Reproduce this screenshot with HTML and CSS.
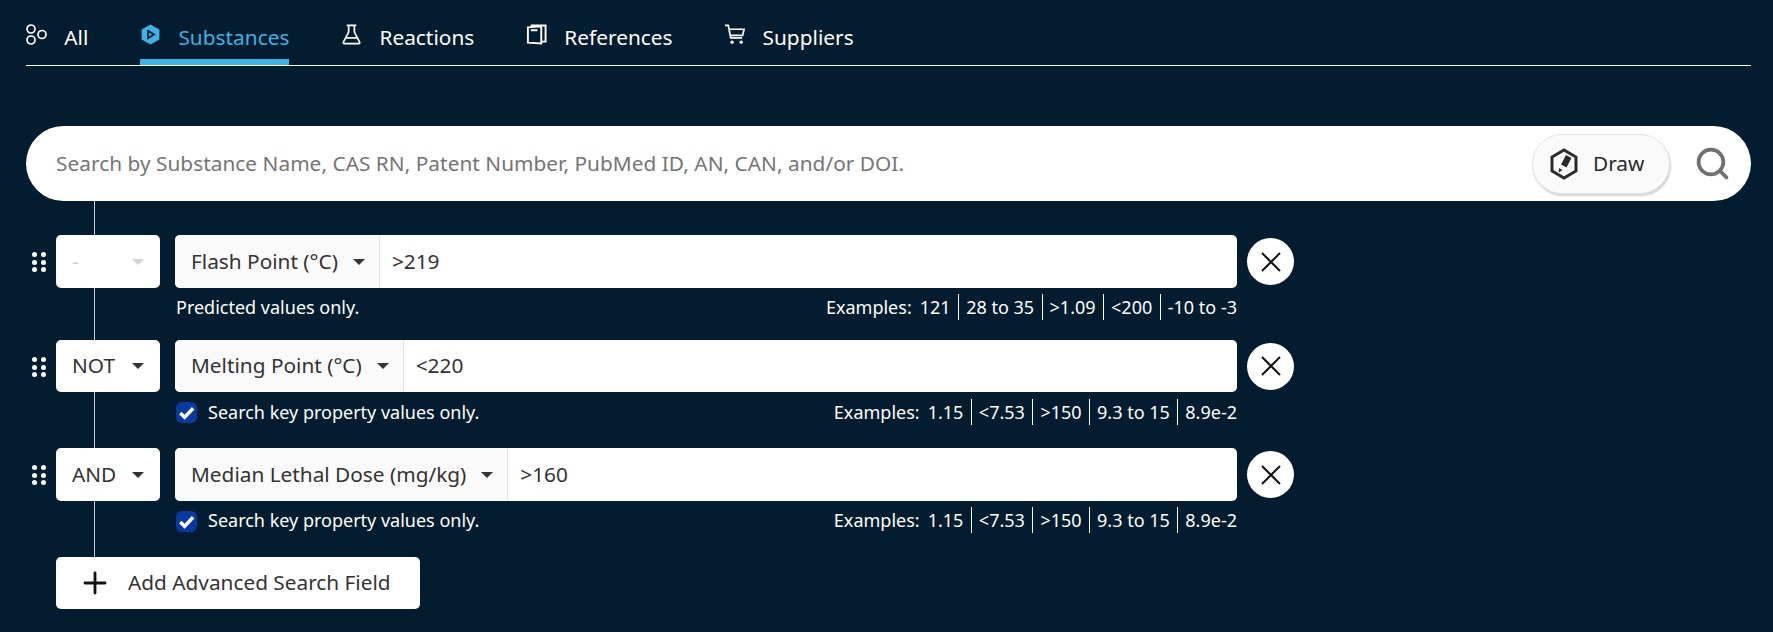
FILE: index.html
```html
<!DOCTYPE html>
<html lang="en">
<head>
<meta charset="utf-8">
<title>Advanced Search</title>
<link rel="stylesheet" href="styles.css">
</head>
<body>
<nav class="tabs">
  <a class="tab"><svg class="tab-icon" viewBox="0 0 21 21" fill="none" stroke="currentColor" stroke-width="1.700"><circle cx="5" cy="5" r="4"/><circle cx="5" cy="16" r="4"/><circle cx="16" cy="10.500" r="4"/></svg><span>All</span></a>
  <a class="tab active"><svg class="tab-icon" viewBox="0 0 22 22"><path fill="currentColor" fill-rule="evenodd" d="M11 0.500l9.300 5.200v10.600L11 21.500l-9.300-5.200V5.700zM7.500 5.500v11l9-5.500zM9.300 8.800l3.700 2.200-3.700 2.200z"/></svg><span>Substances</span></a>
  <a class="tab"><svg class="tab-icon" viewBox="0 0 22 22" fill="none" stroke="currentColor" stroke-width="1.800"><path d="M6 1.500h10M8 1.500v7L2.500 19a1 1 0 0 0 1 1.500h15a1 1 0 0 0 1-1.500L14 8.500v-7M5.500 14.500h11"/></svg><span>Reactions</span></a>
  <a class="tab"><svg class="tab-icon" viewBox="0 0 22 22" fill="none" stroke="currentColor" stroke-width="2"><path d="M2 3.500l14 -1v18l-14 -1zM5 1.500h15.500v17h-4.500M5 6.500h7"/></svg><span>References</span></a>
  <a class="tab"><svg class="tab-icon" viewBox="0 0 22 22" fill="none" stroke="currentColor" stroke-width="1.800"><path d="M1 1.500h3.500l2.500 13h12M5.500 5.500h15.500l-1.500 6.500H7"/><circle cx="8.500" cy="19" r="1.800" fill="currentColor" stroke="none"/><circle cx="18" cy="19" r="1.800" fill="currentColor" stroke="none"/></svg><span>Suppliers</span></a>
</nav>

<section class="search">
  <div class="search-bar">
    <span class="placeholder">Search by Substance Name, CAS RN, Patent Number, PubMed ID, AN, CAN, and/or DOI.</span>
    <button class="draw"><svg class="draw-icon" viewBox="0 0 30 32"><path fill="none" stroke="#2b2b2b" stroke-width="3" d="M15 2l12 7v14l-12 7-12-7V9z"/><path fill="#2b2b2b" d="M17 7l5.500 3-5 9.500-5.500-3zM10 20l3.500 2-3.800 2.500z"/></svg><span>Draw</span></button>
    <svg class="search-icon" viewBox="0 0 32 32" fill="none" stroke="#707070" stroke-width="3.600" stroke-linecap="round"><circle cx="14.500" cy="14.500" r="12"/><path d="M23.500 23.500l6 6"/></svg>
  </div>
</section>

<section class="rows">
  <div class="row hint-short">
    <span class="grip"><i></i><i></i><i></i><i></i><i></i><i></i></span>
    <div class="logic disabled"><span>-</span><b class="caret"></b></div>
    <div class="field">
      <div class="field-select"><span>Flash Point (°C)</span><b class="caret"></b></div>
      <div class="field-value">&gt;219</div>
    </div>
    <button class="remove"><svg viewBox="0 0 20 20" stroke="#111" stroke-width="2" fill="none"><path d="M1 1l18 18M19 1L1 19"/></svg></button>
    <div class="hint">
      <span class="note">Predicted values only.</span>
      <div class="examples"><span class="ex-label">Examples:</span><span class="ex-first">121</span><span>28 to 35</span><span>&gt;1.09</span><span>&lt;200</span><span>-10 to -3</span></div>
    </div>
  </div>

  <div class="row row-slim">
    <span class="grip"><i></i><i></i><i></i><i></i><i></i><i></i></span>
    <div class="logic"><span>NOT</span><b class="caret"></b></div>
    <div class="field">
      <div class="field-select"><span>Melting Point (°C)</span><b class="caret"></b></div>
      <div class="field-value">&lt;220</div>
    </div>
    <button class="remove"><svg viewBox="0 0 20 20" stroke="#111" stroke-width="2" fill="none"><path d="M1 1l18 18M19 1L1 19"/></svg></button>
    <div class="hint">
      <label class="note check"><span class="box"><svg viewBox="0 0 20 20" fill="none" stroke="#fff" stroke-width="3.600"><path d="M3.500 10.500l4.500 4.500 9-9.500"/></svg></span>Search key property values only.</label>
      <div class="examples"><span class="ex-label">Examples:</span><span class="ex-first">1.15</span><span>&lt;7.53</span><span>&gt;150</span><span>9.3 to 15</span><span>8.9e-2</span></div>
    </div>
  </div>

  <div class="row">
    <span class="grip"><i></i><i></i><i></i><i></i><i></i><i></i></span>
    <div class="logic"><span>AND</span><b class="caret"></b></div>
    <div class="field">
      <div class="field-select"><span>Median Lethal Dose (mg/kg)</span><b class="caret"></b></div>
      <div class="field-value">&gt;160</div>
    </div>
    <button class="remove"><svg viewBox="0 0 20 20" stroke="#111" stroke-width="2" fill="none"><path d="M1 1l18 18M19 1L1 19"/></svg></button>
    <div class="hint">
      <label class="note check"><span class="box"><svg viewBox="0 0 20 20" fill="none" stroke="#fff" stroke-width="3.600"><path d="M3.500 10.500l4.500 4.500 9-9.500"/></svg></span>Search key property values only.</label>
      <div class="examples"><span class="ex-label">Examples:</span><span class="ex-first">1.15</span><span>&lt;7.53</span><span>&gt;150</span><span>9.3 to 15</span><span>8.9e-2</span></div>
    </div>
  </div>

  <button class="add"><svg viewBox="0 0 24 24" stroke="#111" stroke-width="2.800" stroke-linecap="round" fill="none"><path d="M12 2v20M2 12h20"/></svg><span>Add Advanced Search Field</span></button>
</section>
</body>
</html>
```
FILE: styles.css
```css
* { box-sizing: border-box; }
html, body { margin: 0; height: 100%; }
body {
  background: #041c2f;
  color: #fff;
  font-family: "Noto Sans", "Open Sans", sans-serif;
  padding: 0 22px 0 26px;
  overflow: hidden;
}
button { font: inherit; border: 0; cursor: pointer; padding: 0; }

.tabs {
  display: flex;
  height: 66px;
  gap: 51.700px;
  border-bottom: 1px solid #fff;
  padding-top: 24px;
}
.tab {
  display: flex;
  align-items: flex-start;
  gap: 17.300px;
  font-size: 20.800px;
  line-height: 26px;
  height: 41px;
  color: #fff;
  letter-spacing: 0.030px;
}
.tab-icon { width: 21px; height: 21px; flex: none; }
.tab.active { color: #3fb1e5; border-bottom: 6px solid #3fb1e5; }

.search { padding-top: 60px; }
.search-bar {
  display: flex;
  align-items: center;
  height: 75px;
  background: #fff;
  border-radius: 38px;
  padding: 0 12px 0 30px;
  position: relative;
  z-index: 1;
}
.placeholder {
  flex: 1;
  font-size: 20.800px;
  color: #757575;
  letter-spacing: 0.040px;
  margin-bottom: 2px;
}
.draw {
  display: flex;
  align-items: center;
  gap: 14px;
  width: 138px;
  height: 60px;
  padding-left: 16px;
  background: #fafafa;
  color: #2b2b2b;
  font-size: 20.800px;
  border-radius: 30px;
  border: 1px solid #e4e4e4;
  box-shadow: 1px 2px 2px #d4d4d4;
}
.draw span { margin-bottom: 2px; }
.draw-icon { width: 30px; height: 32px; flex: none; }
.search-icon { width: 33px; height: 33px; margin: 0 10px 0 26px; flex: none; }

.rows {
  position: relative;
  padding: 34px 0 0 30px;
}
.rows::before {
  content: "";
  position: absolute;
  left: 68px;
  top: 0;
  bottom: 30px;
  width: 1px;
  background: #c8ced3;
}
.row {
  position: relative;
  display: grid;
  grid-template-columns: 104px 1062px 46px;
  column-gap: 15px;
  align-items: center;
  height: 108px;
  align-content: start;
}
.row.hint-short { height: 105px; }
.row > .remove { margin-left: -5px; }

.grip {
  position: absolute;
  left: -24px;
  top: 17px;
  display: grid;
  grid-template-columns: 5px 5px;
  gap: 2.500px 4px;
}
.grip i { width: 5px; height: 5px; border-radius: 50%; background: #fff; }

.logic {
  position: relative;
  display: flex;
  align-items: center;
  justify-content: space-between;
  height: 53px;
  padding: 0 16px;
  background: #fff;
  color: #333;
  font-size: 20.800px;
  border-radius: 5px;
}
.logic span { margin-bottom: 2px; }
.logic.disabled { color: #cfcfcf; }
.logic.disabled .caret { border-top-color: #d4d4d4; }

.caret {
  width: 0;
  height: 0;
  border-left: 6px solid transparent;
  border-right: 6px solid transparent;
  border-top: 6px solid #333;
  flex: none;
}
.field {
  display: flex;
  height: 53px;
  background: #fff;
  border-radius: 5px;
  color: #333;
  font-size: 20.800px;
  overflow: hidden;
}
.row-slim .logic, .row-slim .field { height: 52px; }
.field-select {
  display: flex;
  align-items: center;
  gap: 15px;
  padding: 0 14px 0 16px;
  background: #fafafa;
  border-right: 1px solid #e4e4e4;
}
.field-select span { margin-bottom: 2px; }
.field-value { display: flex; align-items: center; padding: 0 0 2px 12px; }

.remove {
  display: flex;
  align-items: center;
  justify-content: center;
  width: 47px;
  height: 47px;
  border-radius: 50%;
  background: #fff;
}
.remove svg { width: 20px; height: 20px; }

.hint {
  grid-column: 2;
  display: flex;
  justify-content: space-between;
  align-items: center;
  height: 40px;
  padding-bottom: 2px;
  font-size: 18px;
}
.row-slim .hint { height: 41px; }
.note { display: flex; align-items: center; padding-left: 1px; }
.check { padding-left: 1px; gap: 11px; }
.box {
  display: flex;
  width: 21px;
  height: 21px;
  background: #0a3aa0;
  border-radius: 6px;
  padding: 1px;
  margin-top: 2px;
}
.examples { display: flex; align-items: center; }
.examples span { padding: 0 7.500px 0 7px; border-left: 1px solid #fff; line-height: 26px; }
.examples span:last-child { padding-right: 0; }
.examples .ex-label { border-left: 0; padding: 0; }
.examples .ex-first { border-left: 0; padding-left: 8px; }

.add {
  display: flex;
  align-items: center;
  gap: 21px;
  width: 364px;
  height: 52px;
  padding-left: 27px;
  margin-top: 1px;
  background: #fff;
  color: #333;
  font-size: 20.800px;
  border-radius: 5px;
  position: relative;
}
.add span { margin-bottom: 2px; }
.add svg { width: 24px; height: 24px; flex: none; }
```
